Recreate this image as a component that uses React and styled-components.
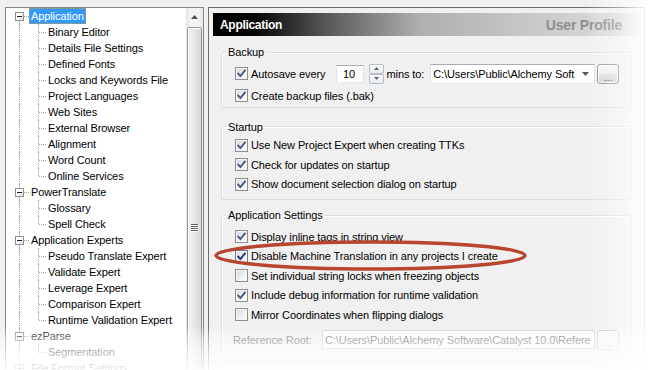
import React from 'react';
import styled, { createGlobalStyle, css } from 'styled-components';

const GlobalStyle = createGlobalStyle`
  html, body {
    margin: 0;
    padding: 0;
    background: #f0f0f0;
  }
  body {
    font-family: 'Liberation Sans', Arial, sans-serif;
    font-size: 11px;
    letter-spacing: -0.1px;
    color: #000;
  }
`;

const Page = styled.div`
  position: relative;
  width: 648px;
  height: 370px;
  box-sizing: border-box;
  padding: 7px 3px 0 5px;
  display: flex;
  gap: 4px;
  overflow: hidden;
  background: #f0f0f0;
`;

/* ---------- tree ---------- */

const TreeBox = styled.div`
  flex: none;
  width: 199px;
  height: 440px;
  box-sizing: border-box;
  border: 1px solid #828790;
  background: #fff;
  display: flex;
`;

const TreeList = styled.div`
  flex: 1;
  min-width: 0;
`;

const Node = styled.div`
  position: relative;
  height: 16px;
  display: flex;
  align-items: center;
  padding-left: ${p => (p.$child ? 40 : 23)}px;
  white-space: nowrap;
`;

const VLine = styled.span`
  position: absolute;
  left: ${p => p.$x}px;
  top: ${p => p.$top}px;
  bottom: ${p => p.$bottom}px;
  border-left: 1px dotted #a0a0a0;
`;

const HLine = styled.span`
  position: absolute;
  left: ${p => p.$x}px;
  top: 8px;
  width: ${p => p.$w}px;
  border-top: 1px dotted #a0a0a0;
`;

const Expander = styled.span`
  position: absolute;
  left: 9px;
  top: 4px;
  width: 9px;
  height: 9px;
  box-sizing: border-box;
  border: 1px solid #919191;
  background: linear-gradient(135deg, #ffffff 40%, #e2e2e2);
  &::before {
    content: '';
    position: absolute;
    left: 1px;
    top: 3px;
    width: 5px;
    height: 1px;
    background: #1c1c1c;
  }
  ${p => p.$collapsed && css`
    &::after {
      content: '';
      position: absolute;
      left: 3px;
      top: 1px;
      width: 1px;
      height: 5px;
      background: #1c1c1c;
    }
  `}
`;

const NodeText = styled.span`
  position: relative;
  padding: 0 2px;
  height: 16px;
  line-height: 16px;
  box-sizing: border-box;
  ${p => p.$selected && css`
    background: #3399ff;
    color: #fff;
    outline: 1px dotted #c89a3a;
    outline-offset: -1px;
  `}
`;

const ScrollBar = styled.div`
  flex: none;
  width: 17px;
  display: flex;
  flex-direction: column;
  background: linear-gradient(to right, #e4e4e4, #f3f3f3 25%, #f3f3f3 75%, #e4e4e4);
`;

const ScrollArrow = styled.div`
  height: 18px;
  display: flex;
  align-items: center;
  justify-content: center;
`;

const Thumb = styled.div`
  margin: 1px 1px 0;
  height: 420px;
  box-sizing: border-box;
  border: 1px solid #979797;
  border-radius: 2px;
  background: linear-gradient(to right, #f3f3f3, #e8e8e8 45%, #d7d7d7);
  box-shadow: inset 1px 1px 0 #ffffff;
  display: flex;
  justify-content: center;
  padding-top: 196px;
`;

const Grip = styled.span`
  width: 7px;
  height: 8px;
  background: repeating-linear-gradient(to bottom, #5e5e5e 0 1px, #ffffff 1px 2px);
`;

/* ---------- settings ---------- */

const SettingsPanel = styled.section`
  flex: 1;
  min-width: 0;
  height: 440px;
  box-sizing: border-box;
  border: 1px solid #6d6d6d;
  padding: 5px 4px 0;
  display: flex;
  flex-direction: column;
`;

const Banner = styled.header`
  flex: none;
  height: 23px;
  display: flex;
  align-items: center;
  justify-content: space-between;
  padding: 0 18px 0 7px;
  background: linear-gradient(to right, #000 0%, #060606 10%, #555 26%, #aeaeae 48%, #c6c6c6 72%, #d6d6d6 90%, #dcdcdc 100%);
`;

const BannerTitle = styled.h1`
  margin: 0;
  font-size: 12px;
  font-weight: bold;
  letter-spacing: -0.3px;
  color: #fff;
`;

const BannerProfile = styled.span`
  font-size: 14px;
  font-weight: bold;
  letter-spacing: -0.2px;
  color: #8e8e8e;
`;

const Body = styled.div`
  padding: 0 8px;
  display: flex;
  flex-direction: column;
`;

const Group = styled.fieldset`
  margin: ${p => p.$gap}px 0 0;
  padding: ${p => p.$pt}px 12px ${p => p.$pb}px 13px;
  border: 1px solid #d5dfe5;
  border-radius: 3px;
  box-shadow: inset 1px 1px 0 #fff;
  min-width: 0;
`;

const GroupTitle = styled.legend`
  margin-left: -9px;
  padding: 0 2px;
  line-height: 14px;
  font-size: 11px;
`;

const CheckRow = styled.div`
  display: flex;
  align-items: center;
  gap: 3px;
  height: ${p => p.$h || 19.5}px;
  white-space: nowrap;
  ${p => p.$w && css`width: ${p.$w}px; flex: none;`}
`;

const FieldRow = styled.div`
  display: flex;
  align-items: center;
  height: ${p => p.$h}px;
  white-space: nowrap;
  margin-top: ${p => p.$mt || 0}px;
`;

const Box = styled.span`
  flex: none;
  width: 13px;
  height: 13px;
  box-sizing: border-box;
  border: 1px solid ${p => (p.$focus ? '#6d7a93' : '#8e8f8f')};
  background: linear-gradient(135deg, #d3d6dc 0%, #eef0f2 55%, #fdfdfd 100%);
  box-shadow: inset 0 0 0 1px #f4f4f4;
  display: flex;
  align-items: center;
  justify-content: center;
`;

const SpinInput = styled.div`
  width: 28px;
  height: 18px;
  box-sizing: border-box;
  border: 1px solid #abadb3;
  border-color: #abadb3 #dbdfe6 #e3e9ef #e2e3ea;
  background: #fff;
  padding-left: 6px;
  line-height: 16px;
`;

const SpinButtons = styled.div`
  margin-left: 5px;
  width: 15px;
  height: 20px;
  display: flex;
  flex-direction: column;
`;

const SpinButton = styled.span`
  flex: 1;
  box-sizing: border-box;
  border: 1px solid #b4bcc6;
  border-radius: 2px;
  background: linear-gradient(#fafbfc, #e8ebef);
  display: flex;
  align-items: center;
  justify-content: center;
`;

const Plain = styled.span`
  margin-left: ${p => p.$ml || 0}px;
  ${p => p.$w && css`width: ${p.$w}px; flex: none;`}
  color: ${p => (p.$disabled ? '#6d6d6d' : 'inherit')};
`;

const Combo = styled.div`
  margin-left: 6px;
  width: 167px;
  height: 20px;
  box-sizing: border-box;
  border: 1px solid #abadb3;
  border-color: #abadb3 #dbdfe6 #e3e9ef #e2e3ea;
  background: #fff;
  display: flex;
  align-items: center;
`;

const ComboText = styled.span`
  flex: 1;
  min-width: 0;
  overflow: hidden;
  padding-left: 2px;
  color: ${p => (p.$disabled ? '#6d6d6d' : 'inherit')};
`;

const ComboArrow = styled.span`
  flex: none;
  width: 18px;
  display: flex;
  justify-content: center;
`;

const TextField = styled.div`
  width: 279px;
  height: 19px;
  box-sizing: border-box;
  border: 1px solid #cfd3d8;
  background: #fbfbfb;
  display: flex;
  align-items: center;
`;

const DotsButton = styled.button`
  flex: none;
  margin-left: 2px;
  width: 22px;
  height: 20px;
  padding: 6px 0 0;
  border: 1px solid ${p => (p.$disabled ? '#c2c4c6' : '#8e8f8f')};
  border-radius: 3px;
  background: ${p => (p.$disabled
    ? '#f4f4f4'
    : 'linear-gradient(#f4f4f4 0%, #ececec 50%, #dedede 51%, #d2d2d2 100%)')};
  box-shadow: inset 0 0 0 1px rgba(255, 255, 255, 0.7);
  font-family: 'Liberation Sans', Arial, sans-serif;
  font-size: 11px;
  line-height: 10px;
  color: ${p => (p.$disabled ? '#a6a6a6' : '#333')};
`;

const Annotation = styled.svg`
  position: absolute;
  left: 213px;
  top: 239px;
  pointer-events: none;
`;

const Fade = styled.div`
  position: absolute;
  inset: 0;
  pointer-events: none;
  background:
    linear-gradient(to right, rgba(255,255,255,0) 585px, rgba(255,255,255,0.4) 620px, rgba(255,255,255,0.8) 638px, rgba(255,255,255,0.95) 648px),
    linear-gradient(to bottom, rgba(255,255,255,0) 326px, rgba(255,255,255,0.4) 337px, rgba(255,255,255,0.68) 352px, rgba(255,255,255,0.92) 370px);
`;

/* ---------- data ---------- */

const tree = [
  { label: 'Application', selected: true, children: ['Binary Editor', 'Details File Settings', 'Defined Fonts', 'Locks and Keywords File', 'Project Languages', 'Web Sites', 'External Browser', 'Alignment', 'Word Count', 'Online Services'] },
  { label: 'PowerTranslate', children: ['Glossary', 'Spell Check'] },
  { label: 'Application Experts', children: ['Pseudo Translate Expert', 'Validate Expert', 'Leverage Expert', 'Comparison Expert', 'Runtime Validation Expert'] },
  { label: 'ezParse', children: ['Segmentation'] },
  { label: 'File Format Settings', collapsed: true, children: [] },
];

const Check = ({ focus }) => (
  <svg width="9" height="9" viewBox="0 0 9 9">
    <path d="M1.2 4.6 L3.4 7 L7.8 1.6" fill="none" stroke={focus ? '#1d3672' : '#4a5b80'} strokeWidth="1.9" strokeLinecap="square" />
  </svg>
);

const CheckItem = ({ checked, focus, children, w }) => (
  <CheckRow $w={w} $h={w ? 20 : undefined}>
    <Box $focus={focus}>{checked && <Check focus={focus} />}</Box>
    <span>{children}</span>
  </CheckRow>
);

const Triangle = ({ up, color = '#4d4d4d', w = 7, h = 4 }) => (
  <svg width={w} height={h} viewBox={`0 0 ${w} ${h}`}>
    <path d={up ? `M0 ${h} L${w / 2} 0 L${w} ${h}Z` : `M0 0 L${w / 2} ${h} L${w} 0Z`} fill={color} />
  </svg>
);

const App = () => (
  <Page>
    <GlobalStyle />
    <TreeBox>
      <TreeList>
        {tree.map((root, ri) => (
          <React.Fragment key={root.label}>
            <Node>
              <VLine $x={13} $top={ri === 0 ? 8 : 0} $bottom={0} />
              <HLine $x={14} $w={9} />
              <Expander $collapsed={root.collapsed} />
              <NodeText $selected={root.selected}>{root.label}</NodeText>
            </Node>
            {root.children.map((child, ci) => (
              <Node $child key={child}>
                <VLine $x={13} $top={0} $bottom={0} />
                <VLine $x={32} $top={0} $bottom={ci === root.children.length - 1 ? 8 : 0} />
                <HLine $x={33} $w={7} />
                <NodeText>{child}</NodeText>
              </Node>
            ))}
          </React.Fragment>
        ))}
      </TreeList>
      <ScrollBar>
        <ScrollArrow>
          <Triangle up w={7} h={4} color="#505050" />
        </ScrollArrow>
        <Thumb>
          <Grip />
        </Thumb>
      </ScrollBar>
    </TreeBox>

    <SettingsPanel>
      <Banner>
        <BannerTitle>Application</BannerTitle>
        <BannerProfile>User Profile</BannerProfile>
      </Banner>
      <Body>
        <Group $gap={9} $pt={2} $pb={1}>
          <GroupTitle>Backup</GroupTitle>
          <FieldRow $h={25}>
            <CheckItem checked w={101}>Autosave every</CheckItem>
            <SpinInput>10</SpinInput>
            <SpinButtons>
              <SpinButton><Triangle up w={5} h={3} color="#4d6185" /></SpinButton>
              <SpinButton><Triangle w={5} h={3} color="#4d6185" /></SpinButton>
            </SpinButtons>
            <Plain $ml={3}>mins to:</Plain>
            <Combo>
              <ComboText>C:\Users\Public\Alchemy Soft</ComboText>
              <ComboArrow><Triangle w={7} h={4} color="#555" /></ComboArrow>
            </Combo>
            <DotsButton type="button">...</DotsButton>
          </FieldRow>
          <CheckItem checked>Create backup files (.bak)</CheckItem>
        </Group>

        <Group $gap={12} $pt={2} $pb={5}>
          <GroupTitle>Startup</GroupTitle>
          <CheckItem checked>Use New Project Expert when creating TTKs</CheckItem>
          <CheckItem checked>Check for updates on startup</CheckItem>
          <CheckItem checked>Show document selection dialog on startup</CheckItem>
        </Group>

        <Group $gap={8} $pt={5} $pb={10}>
          <GroupTitle>Application Settings</GroupTitle>
          <CheckItem checked>Display inline tags in string view</CheckItem>
          <CheckItem checked focus>Disable Machine Translation in any projects I create</CheckItem>
          <CheckItem>Set individual string locks when freezing objects</CheckItem>
          <CheckItem checked>Include debug information for runtime validation</CheckItem>
          <CheckItem>Mirror Coordinates when flipping dialogs</CheckItem>
          <FieldRow $h={22} $mt={4}>
            <Plain $disabled $w={89} style={{ marginLeft: -2 }}>Reference Root:</Plain>
            <TextField>
              <ComboText $disabled>C:\Users\Public\Alchemy Software\Catalyst 10.0\Refere</ComboText>
            </TextField>
            <DotsButton type="button" $disabled>...</DotsButton>
          </FieldRow>
        </Group>
      </Body>
    </SettingsPanel>

    <Annotation width="316" height="34" viewBox="0 0 316 34">
      <ellipse cx="157.5" cy="16.5" rx="154.5" ry="13.5" fill="none" stroke="#b8452f" strokeWidth="3.4" />
    </Annotation>
    <Fade />
  </Page>
);

export default App;
